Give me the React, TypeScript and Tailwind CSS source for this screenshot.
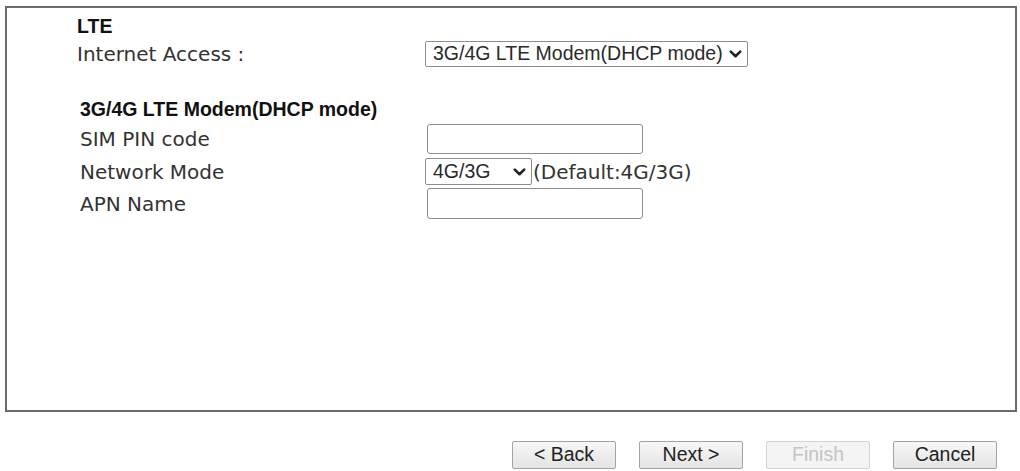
import React from "react";

const label = "font-['DejaVu_Sans',Verdana,sans-serif] text-[20px] text-[#333]";
const arial = "font-['Liberation_Sans',Arial,sans-serif]";

const Chevron: React.FC = () => (
  <svg width="13" height="8" viewBox="0 0 13 8" className="shrink-0">
    <path d="M1.8 1.6 L6.5 6.2 L11.2 1.6" fill="none" stroke="#222" strokeWidth="2.6" strokeLinecap="round" strokeLinejoin="round" />
  </svg>
);

const FakeSelect: React.FC<{ value: string; className: string }> = ({ value, className }) => (
  <div
    className={`flex items-center justify-between border border-[#8d8d8d] rounded-[2px] bg-white pl-[7px] pr-[5px] ${arial} text-[19.5px] text-[#2a2a2a] ${className}`}
  >
    <span className="leading-none">{value}</span>
    <Chevron />
  </div>
);

const TextBox: React.FC = () => (
  <input
    type="text"
    className="w-[216px] h-full border border-[#8d8d8d] rounded-[3px] bg-white outline-none"
  />
);

const App: React.FC = () => {
  return (
    <div className="w-[1020px] h-[471px] bg-white overflow-hidden">
      <div className="pt-[6px] pl-[5px]">
        <div className="w-[1012px] h-[406px] border-2 border-[#6b6b6b] flex flex-col pl-[70px]">
          <div className={`mt-[7px] h-[22px] leading-[22px] ${arial} font-bold text-[19.5px] text-[#111]`}>LTE</div>

          <div className="mt-[4px] h-[26px] flex items-center">
            <div className={`w-[348px] ${label}`}>Internet Access :</div>
            <FakeSelect value="3G/4G LTE Modem(DHCP mode)" className="w-[323px] h-[26px]" />
          </div>

          <div className={`mt-[31px] h-[22px] leading-[22px] pl-[3px] ${arial} font-bold text-[19.5px] text-[#111]`}>
            3G/4G LTE Modem(DHCP mode)
          </div>

          <div className="mt-[4px] h-[30px] flex items-center">
            <div className={`w-[350px] pl-[3px] ${label}`}>SIM PIN code</div>
            <TextBox />
          </div>

          <div className="mt-[4px] h-[27px] flex items-center">
            <div className={`w-[348px] pl-[3px] ${label}`}>Network Mode</div>
            <FakeSelect value="4G/3G" className="w-[107px] h-[27px]" />
            <span className={`${label} ml-[1px]`}>(Default:4G/3G)</span>
          </div>

          <div className="mt-[3px] h-[31px] flex items-center">
            <div className={`w-[350px] pl-[3px] ${label}`}>APN Name</div>
            <TextBox />
          </div>
        </div>
      </div>

      <div className="mt-[29px] flex justify-end gap-[23px] pr-[23px]">
        {["< Back", "Next >", "Finish", "Cancel"].map((t) => {
          const off = t === "Finish";
          return (
            <button
              key={t}
              disabled={off}
              className={`w-[104px] h-[28px] rounded-[2px] border ${arial} text-[19.5px] leading-none ${
                off
                  ? "border-[#d4d4d4] bg-[#f4f4f4] text-[#c4c4c4]"
                  : "border-[#a3a3a3] bg-gradient-to-b from-[#f7f7f7] to-[#e4e4e4] text-[#222]"
              }`}
            >
              {t}
            </button>
          );
        })}
      </div>
    </div>
  );
};

export default App;
